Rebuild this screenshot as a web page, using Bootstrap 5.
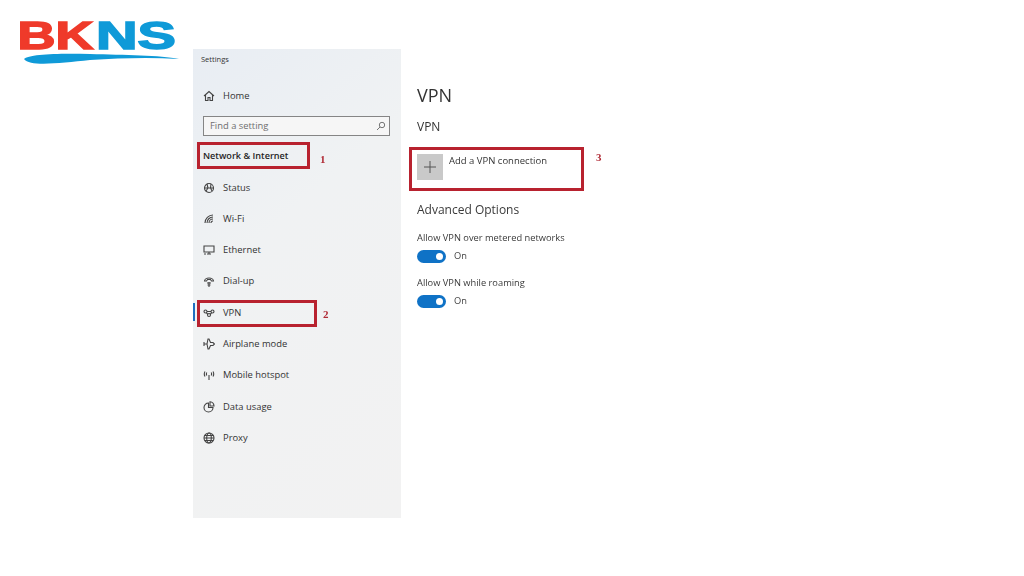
<!doctype html>
<html lang="en"><head><meta charset="utf-8"><title>VPN settings</title>
<link href="https://cdn.jsdelivr.net/npm/bootstrap@5.3.0/dist/css/bootstrap.min.css" rel="stylesheet">
<style>
html,body{height:576px;overflow:hidden;background:#fff}
body{font-family:"Open Sans","Noto Sans",sans-serif;color:#2b2b2b}
.stage{position:relative;width:1024px;height:576px}
.brand{position:absolute;left:0;top:0;width:190px;height:76px}
.shot{position:absolute;left:193px;top:49px;width:410px;height:469px}
.side{width:208px;height:469px;background:linear-gradient(140deg,#e8edf3 0%,#f0f2f3 38%,#f2f2f2 100%);position:relative;flex:none}
.s-title{font-size:7.5px;line-height:10px;padding:5px 0 0 8px;height:36px;color:#333}
.s-row{height:31.3px;font-size:9.4px;padding-left:10px;gap:8px;color:#333}
.s-row svg{width:12px;height:12px;flex:none;stroke:#444;fill:none;stroke-width:1.1}
.s-home{margin-top:-2px;height:26px}
.s-search{margin:7px 11px 0 10px;height:20px;border:1px solid #858585;background:#f6f6f6;font-size:9.4px;color:#6f6f6f;padding:0 3px 0 6px}
.s-search svg{width:10px;height:10px;stroke:#777;fill:none;stroke-width:1}
.s-head{font-size:9.1px;font-weight:600;color:#1f1f1f;padding-left:10px;height:20px;margin-top:10px;margin-bottom:6px}
.s-sel{position:absolute;left:0;top:254px;width:2px;height:18px;background:#1f6fc0}
.pane{padding:36px 0 0 16px;color:#333}
.p-h1{font-size:18px;line-height:20px;font-weight:400;margin:0 0 14px;color:#333}
.p-h2{font-size:12px;line-height:16px;font-weight:500;margin:0 0 19px;color:#333}
.p-add{gap:6px;font-size:9.5px;height:26px;margin-bottom:22px}
.p-plus{width:26px;height:26px;background:#c9c9c9;flex:none}
.p-plus svg{width:12px;height:12px;stroke:#555;stroke-width:1}
.p-h3{font-size:12px;line-height:16px;margin:0 0 14px;color:#3a3a3a}
.p-lab{font-size:9.3px;line-height:12px;margin-bottom:5.5px;color:#3a3a3a}
.p-tog{font-size:9.3px;gap:8px;height:13px;margin-bottom:14.5px;color:#444}
.p-sw{width:29px;height:13px;border-radius:7px;background:#0f72c6;position:relative;flex:none}
.p-sw::after{content:"";position:absolute;right:3px;top:3px;width:7px;height:7px;border-radius:50%;background:#fff}
.red{position:absolute;border:3px solid #b8222f}
.r1{left:197px;top:142px;width:113px;height:27px}
.r2{left:197px;top:300px;width:120px;height:27px}
.r3{left:409px;top:147px;width:175px;height:44px}
.num{position:absolute;font-family:"Liberation Serif",serif;font-weight:700;font-size:11px;line-height:12px;color:#b02a35}
.n1{left:320px;top:153px}.n2{left:323px;top:308px}.n3{left:596px;top:151px}
.shot,.red,.num{filter:blur(.4px)}
.brand{filter:blur(.3px)}
</style></head><body>
<div class="stage">
<svg class="brand" viewBox="0 0 190 76" aria-label="BKNS">
<text x="17.500" y="48.500" font-family="Liberation Sans" font-weight="700" font-size="39" textLength="76" lengthAdjust="spacingAndGlyphs" fill="#ef3a2a" stroke="#ef3a2a" stroke-width="1.500">BK</text>
<text x="96" y="48.500" font-family="Liberation Sans" font-weight="700" font-size="39" textLength="80" lengthAdjust="spacingAndGlyphs" fill="#0f9ad8" stroke="#0f9ad8" stroke-width="1.500">NS</text>
<path d="M24 59C28 54 60 53 90 54C125 55 160 55 179 59C150 57 120 58 90 60C60 63 30 67 24 59Z" fill="#0f9ad8"/>
</svg>

<div class="shot d-flex">
<aside class="side">
<div class="s-title">Settings</div>
<div class="s-row s-home d-flex align-items-center"><svg viewBox="0 0 12 12"><path d="M1 6 6 1.500 11 6M2.500 5v5.500h2.500V7.500h2v3h2.500V5"/></svg><span>Home</span></div>
<div class="s-search d-flex align-items-center justify-content-between"><span>Find a setting</span><svg viewBox="0 0 10 10"><circle cx="6" cy="4" r="2.700"/><path d="M4 6 1 9"/></svg></div>
<div class="s-head d-flex align-items-center">Network &amp; Internet</div>
<div class="s-row d-flex align-items-center"><svg viewBox="0 0 12 12"><circle cx="6" cy="6" r="4.500"/><path d="M1.500 6h9M4 2l1 4-2 3M8 2 7.500 6 9 9"/></svg>Status</div>
<div class="s-row d-flex align-items-center"><svg viewBox="0 0 12 12"><path d="M2 10a8 8 0 0 1 8-8M4 10a6 6 0 0 1 6-6M6 10a4 4 0 0 1 4-4M8 10a2 2 0 0 1 2-2"/></svg>Wi-Fi</div>
<div class="s-row d-flex align-items-center"><svg viewBox="0 0 12 12"><path d="M1 2h10v6H1zM4 10h4M6 8v2M1 10h2"/></svg>Ethernet</div>
<div class="s-row d-flex align-items-center"><svg viewBox="0 0 12 12"><path d="M1.500 5a4.500 3 0 0 1 9 0l-2 0-1-1.500h-3L3.500 5zM4 7h4M4.500 9h3M6 6v5"/></svg>Dial-up</div>
<div class="s-row d-flex align-items-center"><svg viewBox="0 0 12 12"><circle cx="2.500" cy="4.500" r="1.500"/><circle cx="9.500" cy="4.500" r="1.500"/><circle cx="6" cy="8" r="1.500"/><path d="M4 4.500h4M3.500 6 5 7.500M8.500 6 7 7.500"/></svg>VPN</div>
<div class="s-row d-flex align-items-center"><svg viewBox="0 0 12 12"><path d="M1 6h3l1-5h1l1.500 3.500H10L11.500 6 10 7.500H7.500L6 11H5L4 6M1 4v4"/></svg>Airplane mode</div>
<div class="s-row d-flex align-items-center"><svg viewBox="0 0 12 12"><path d="M6 6v5M2 2.500a5 5 0 0 0 0 5M10 2.500a5 5 0 0 1 0 5M3.800 3.500a3 3 0 0 0 0 3M8.200 3.500a3 3 0 0 1 0 3"/></svg>Mobile hotspot</div>
<div class="s-row d-flex align-items-center"><svg viewBox="0 0 12 12"><path d="M5.500 2a4.500 4.500 0 1 0 4.500 4.500H5.500zM7 .8A4.500 4.500 0 0 1 11 5H7z"/></svg>Data usage</div>
<div class="s-row d-flex align-items-center"><svg viewBox="0 0 12 12"><circle cx="6" cy="6" r="5"/><ellipse cx="6" cy="6" rx="2.300" ry="5"/><path d="M1 6h10M1.700 3.500h8.600M1.700 8.500h8.600"/></svg>Proxy</div>
<div class="s-sel"></div>
</aside>
<main class="pane flex-grow-1">
<h1 class="p-h1">VPN</h1>
<h2 class="p-h2">VPN</h2>
<div class="p-add d-flex"><div class="p-plus d-flex align-items-center justify-content-center"><svg viewBox="0 0 12 12"><path d="M6 0v12M0 6h12"/></svg></div><span>Add a VPN connection</span></div>
<h3 class="p-h3">Advanced Options</h3>
<div class="p-lab">Allow VPN over metered networks</div>
<div class="p-tog d-flex align-items-center"><div class="p-sw"></div><span>On</span></div>
<div class="p-lab">Allow VPN while roaming</div>
<div class="p-tog d-flex align-items-center"><div class="p-sw"></div><span>On</span></div>
</main>
</div>
<div class="red r1"></div><div class="red r2"></div><div class="red r3"></div>
<div class="num n1">1</div><div class="num n2">2</div><div class="num n3">3</div>
</div>
<script src="https://cdn.jsdelivr.net/npm/bootstrap@5.3.0/dist/js/bootstrap.bundle.min.js"></script>
</body></html>
